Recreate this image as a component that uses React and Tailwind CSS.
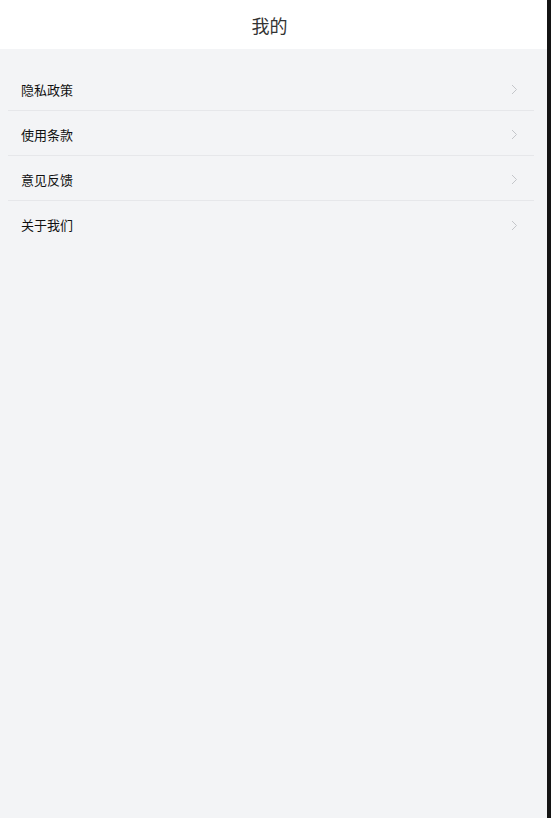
import React from "react"

const items = ["隐私政策", "使用条款", "意见反馈", "关于我们"]

function Chevron() {
  return (
    <svg width="7" height="11" viewBox="0 0 7 11" fill="none" className="shrink-0">
      <path d="M1 1l4.5 4.5L1 10" stroke="#c4c6ca" strokeWidth="1" />
    </svg>
  )
}

export default function App() {
  return (
    <div
      className="flex h-[818px] w-full overflow-hidden"
      style={{ fontFamily: '"Noto Sans CJK SC", "Noto Sans", sans-serif' }}
    >
      <div className="flex flex-1 flex-col bg-[#f3f4f6]">
        <div className="flex h-[49px] items-center justify-center bg-white pr-2 pt-[2px]">
          <span className="text-[18px] text-[#333]">我的</span>
        </div>

        {/* list */}
        <div className="mt-[17px] ml-2 mr-[13px]">
          {items.map((t, i) => (
            <div
              key={t}
              className={
                "flex h-[45px] items-center justify-between pl-[13px] pr-[16px] pt-[3px] " +
                (i < items.length - 1 ? "border-b border-[#e6e7ea]" : "")
              }
            >
              <span className="text-[13px] text-[#111]">{t}</span>
              <Chevron />
            </div>
          ))}
        </div>
      </div>
      <div className="w-[4px] bg-[#141414]"></div>
    </div>
  )
}
